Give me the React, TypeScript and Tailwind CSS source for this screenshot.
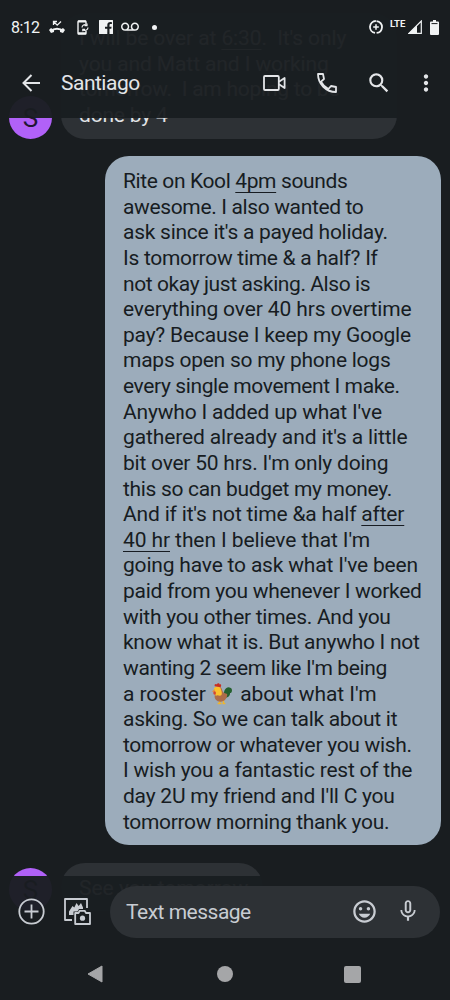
import type { ReactNode } from "react";
import {
	MdMicNone,
	MdMoreVert,
	MdOutlineInsertEmoticon,
	MdSearch,
	MdVoicemail,
} from "react-icons/md";

interface Line {
	content: ReactNode;
	spacing: number;
}

function Link({ children }: { children: ReactNode }) {
	return (
		<span className="underline decoration-[1.3px] underline-offset-[4px]">
			{children}
		</span>
	);
}

function Rooster() {
	return (
		<svg
			viewBox="0 0 22 24"
			className="mr-[3px] inline-block h-[24px] w-[21px] align-[-5px]"
		>
			<path d="M9 18v4M13 18v4M7 22h4M12 22h3" stroke="#efb52c" strokeWidth="1.6" />
			<path
				d="M14 14c-1-4 0-8 4-9 2 0 4 1 4 3s-1 3-2 3c0 3-2 5-6 5z"
				fill="#24602f"
			/>
			<path
				d="M4 7c0-3 5-4 7-1 1 2 1 4 3 5l3 1c0 5-3 8-7 8s-7-3-6-7c1-2 1-4 0-6z"
				fill="#ad6c49"
			/>
			<path d="M3 7c0-3 6-4 7-1 1 3 2 5 1 7-2 2-4-1-6 1-1-2 0-4-2-7z" fill="#fac02c" />
			<path d="M4 4c-1-2 1-3 2-2 1-2 3-1 3 0 2-1 2 1 1 3z" fill="#c72f22" />
			<path d="M4 7 .8 9.5l3 .5z" fill="#ef8b32" />
			<ellipse cx="3.8" cy="11" rx="1.4" ry="1.8" fill="#d44732" />
		</svg>
	);
}

const outgoing: Line[] = [
	{ content: <>Rite on Kool <Link>4pm</Link> sounds</>, spacing: -0.38 },
	{ content: "awesome. I also wanted to", spacing: -0.36 },
	{ content: "ask since it's a payed holiday.", spacing: -0.26 },
	{ content: "Is tomorrow time & a half? If", spacing: -0.29 },
	{ content: "not okay just asking. Also is", spacing: -0.41 },
	{ content: "everything over 40 hrs overtime", spacing: -0.13 },
	{ content: "pay? Because I keep my Google", spacing: -0.21 },
	{ content: "maps open so my phone logs", spacing: -0.25 },
	{ content: "every single movement I make.", spacing: -0.39 },
	{ content: "Anywho I added up what I've", spacing: -0.19 },
	{ content: "gathered already and it's a little", spacing: -0.12 },
	{ content: "bit over 50 hrs. I'm only doing", spacing: -0.23 },
	{ content: "this so can budget my money.", spacing: -0.32 },
	{ content: <>And if it's not time &amp;a half <Link>after</Link></>, spacing: -0.18 },
	{ content: <><Link>40 hr</Link> then I believe that I'm</>, spacing: -0.1 },
	{ content: "going have to ask what I've been", spacing: -0.19 },
	{ content: "paid from you whenever I worked", spacing: -0.29 },
	{ content: "with you other times. And you", spacing: -0.28 },
	{ content: "know what it is. But anywho I not", spacing: -0.27 },
	{ content: "wanting 2 seem like I'm being", spacing: -0.36 },
	{ content: <>a rooster <Rooster /> about what I'm</>, spacing: -0.06 },
	{ content: "asking. So we can talk about it", spacing: -0.29 },
	{ content: "tomorrow or whatever you wish.", spacing: -0.3 },
	{ content: "I wish you a fantastic rest of the", spacing: -0.24 },
	{ content: "day 2U my friend and I'll C you", spacing: -0.23 },
	{ content: "tomorrow morning thank you.", spacing: -0.33 },
];

const incoming: Line[] = [
	{ content: <>I will be over at <Link>6:30</Link>.&nbsp; It's only</>, spacing: -0.1 },
	{ content: "you and Matt and I working", spacing: -0.1 },
	{ content: <>tomorrow.&nbsp; I am hoping to be</>, spacing: -0.25 },
	{ content: "done by 4", spacing: -0.2 },
];

function Bubble({ lines, className }: { lines: Line[]; className: string }) {
	return (
		<div className={`rounded-[24px] px-[18px] pt-[13px] pb-[10px] ${className}`}>
			{lines.map((line, index) => (
				<p
					key={index}
					className="h-[25.63px] text-[21px] leading-[25.63px] whitespace-nowrap"
					style={{ letterSpacing: line.spacing }}
				>
					{line.content}
				</p>
			))}
		</div>
	);
}

function Avatar() {
	return (
		<div className="flex size-[43px] shrink-0 items-center justify-center rounded-full bg-[#b161f8] pt-[2px] text-[26px] text-[#211634]">
			S
		</div>
	);
}

function StatusBar() {
	return (
		<div className="flex h-[54px] items-center pr-[11px] pl-[11px] text-[#f1f3f4]">
			<span className="w-[38px] pt-[2px] text-[16px] tracking-[-0.6px]">8:12</span>
			<svg viewBox="0 0 16 14" className="h-[14px] w-[16px]" fill="none">
				<path d="M2 11c3-3 9-3 12 0" stroke="currentColor" strokeWidth="2" />
				<path
					d="m0 10 2-2 3 2v2L2 13zM16 10l-2-2-3 2v2l3 1z"
					fill="currentColor"
				/>
				<path d="M4.5 5V1.5H8M5 2l3.2 3.2L12 1.5" stroke="currentColor" strokeWidth="1.3" />
			</svg>
			<svg viewBox="0 0 12 15" className="ml-[12px] h-[15px] w-[12px]" fill="none">
				<path
					d="M9 4V1.8a.8.8 0 0 0-.8-.8H1.8a.8.8 0 0 0-.8.8v11.4c0 .4.4.8.8.8h6.4c.4 0 .8-.4.8-.8V11"
					stroke="currentColor"
					strokeWidth="1.4"
				/>
				<path d="M1 1.5h8M1 13.3h8" stroke="currentColor" strokeWidth="2" />
				<path
					d="M5 7.5A3 3 0 0 1 9.5 5M11 7.5A3 3 0 0 1 6.5 10M7.6 5.6h2.4V3.6M8 9.3H5.8v2"
					stroke="currentColor"
					strokeWidth="1.2"
				/>
			</svg>
			<svg viewBox="0 0 14 14" className="ml-[10px] size-[14px]">
				<path
					d="M.5 0h13a.5.5 0 0 1 .5.5v13a.5.5 0 0 1-.5.5h-3V8.8h1.8l.3-2.1h-2.1V5.3c0-.8.3-1.2 1.2-1.2h1.2V2.2c-2.9-.5-4.6.4-4.6 2.8v1.7H6v2.1h2.3V14H.5a.5.5 0 0 1-.5-.5V.5A.5.5 0 0 1 .5 0z"
					fill="currentColor"
				/>
			</svg>
			<MdVoicemail className="ml-[8px] size-[18px]" />
			<span className="ml-[13px] size-[5px] rounded-full bg-current" />
			<svg
				viewBox="0 0 14 14"
				className="ml-auto size-[14px]"
				fill="none"
				stroke="currentColor"
			>
				<circle
					cx="7"
					cy="7"
					r="6"
					strokeWidth="1.8"
					strokeDasharray="17.2 1.65"
					transform="rotate(-85 7 7)"
				/>
				<path d="M7 4.2v5.6M4.2 7h5.6" strokeWidth="1.5" />
			</svg>
			<span className="mb-[7px] ml-[7px] w-[17px] text-[9.5px] leading-none font-bold">
				LTE
			</span>
			<svg viewBox="0 0 14 14" className="ml-px size-[14px]">
				<path d="M13.3 1v12.3H1z" fill="none" stroke="currentColor" strokeWidth="1.2" />
				<path d="M9 5.5V14H0z" fill="currentColor" />
			</svg>
			<svg viewBox="0 0 9 15" className="ml-[8px] h-[15px] w-[9px]">
				<path
					d="M3 0h3v1.5h2a1 1 0 0 1 1 1V14a1 1 0 0 1-1 1H1a1 1 0 0 1-1-1V2.5a1 1 0 0 1 1-1h2z"
					fill="currentColor"
				/>
				<path d="M1.5 3.6h6" stroke="#1a1d20" strokeWidth="1" />
			</svg>
		</div>
	);
}

function Header() {
	return (
		<header className="absolute inset-x-0 top-0 h-[118px] bg-[#191d20]/96">
			<StatusBar />
			<div className="flex h-[58px] items-center text-[#e3e5e8]">
				<svg
					viewBox="0 0 18 18"
					className="ml-[22px] size-[18px]"
					fill="none"
					stroke="currentColor"
					strokeWidth="2"
				>
					<path d="M18 9H1.5M9.5 1 1.5 9l8 8" />
				</svg>
				<h1 className="ml-[21px] pt-px text-[21px] tracking-[-0.5px]">Santiago</h1>
				<svg
					viewBox="0 0 23 16"
					className="ml-auto h-[16px] w-[23px]"
					fill="none"
					stroke="currentColor"
					strokeWidth="1.8"
					strokeLinejoin="round"
				>
					<rect x="1" y="1" width="14.8" height="14" rx="1" />
					<path d="M16 6.8 21.6 3v10L16 9.2" />
				</svg>
				<svg
					viewBox="0 0 20 20"
					className="ml-[31px] size-[20px]"
					fill="none"
					stroke="currentColor"
					strokeWidth="1.8"
					strokeLinejoin="round"
				>
					<path d="M1 1h5l1 5-3 2.6c1.8 3.4 4 5.6 7.4 7.4L14 13l5 1v5C9 19 1 11 1 1z" />
				</svg>
				<MdSearch className="ml-[29px] size-[26px]" />
				<MdMoreVert className="mr-[11px] ml-[21px] size-[26px]" />
			</div>
		</header>
	);
}

function Composer() {
	return (
		<footer className="absolute inset-x-0 bottom-0 h-[124px] bg-[#191d20]/96 pt-[9.5px]">
			<div className="flex items-center text-[#c8ccd2]">
				<svg
					viewBox="0 0 27 27"
					className="ml-[18px] size-[27px]"
					fill="none"
					stroke="currentColor"
					strokeWidth="1.8"
				>
					<circle cx="13.5" cy="13.5" r="12.2" />
					<path d="M13.5 6.5v14M6.5 13.5h14" />
				</svg>
				<svg
					viewBox="0 0 27 27"
					className="ml-[19px] size-[27px]"
					fill="none"
					stroke="currentColor"
					strokeWidth="1.8"
					strokeLinejoin="round"
				>
					<path d="M23 10V1H1v21h7" />
					<path
						d="M5 13.5 8.5 8l1.8 1.5L12.5 5l2.2 3L17 5l2 4.5V11h-4l-1.5 2.5H9.5V17H5z"
						fill="currentColor"
						stroke="none"
					/>
					<path d="M11.2 15h3.3l1.2-2.2h5L22 15h4v11H11.2z" />
					<circle cx="18.5" cy="20.2" r="2.6" fill="currentColor" stroke="none" />
				</svg>
				<div className="ml-[19px] flex h-[52.5px] w-[330px] items-center rounded-full bg-[#2d3135] pl-[16px]">
					<span className="pt-[2px] text-[21px] tracking-[-0.5px]">Text message</span>
					<MdOutlineInsertEmoticon className="mr-[17px] ml-auto size-[27px]" />
					<MdMicNone className="mr-[19px] mb-px size-[26px]" />
				</div>
			</div>
			<nav className="mt-[23px] flex h-[26px] items-center text-[#a5a6a8]">
				<svg viewBox="0 0 16 18" className="ml-[87px] h-[18px] w-[16px]">
					<path d="M15 1v16L1 9z" fill="currentColor" stroke="currentColor" strokeLinejoin="round" />
				</svg>
				<span className="ml-[114px] size-[16px] rounded-full bg-current" />
				<span className="ml-[111px] size-[17px] rounded-[2px] bg-current" />
			</nav>
		</footer>
	);
}

export default function App() {
	return (
		<div className="relative h-[1000px] w-[450px] overflow-hidden bg-[#191d20] font-['Roboto',sans-serif]">
			<main className="flex flex-col pt-[13px]">
				<div className="flex items-end pl-[9px]">
					<Avatar />
					<Bubble
						lines={incoming}
						className="ml-[9px] w-[336px] bg-[#2d3135] text-[#e1e3e6]"
					/>
				</div>
				<Bubble
					lines={outgoing}
					className="mt-[17.5px] mr-[9px] w-[336px] self-end bg-[#9cacbb] text-[#171c22]"
				/>
				<div className="mt-[17.5px] flex items-end pl-[9px]">
					<Avatar />
					<Bubble
						lines={[{ content: "See you tomorrow", spacing: 0 }]}
						className="ml-[9px] w-[202px] bg-[#2d3135] text-[#e1e3e6]"
					/>
				</div>
			</main>
			<Header />
			<Composer />
		</div>
	);
}
